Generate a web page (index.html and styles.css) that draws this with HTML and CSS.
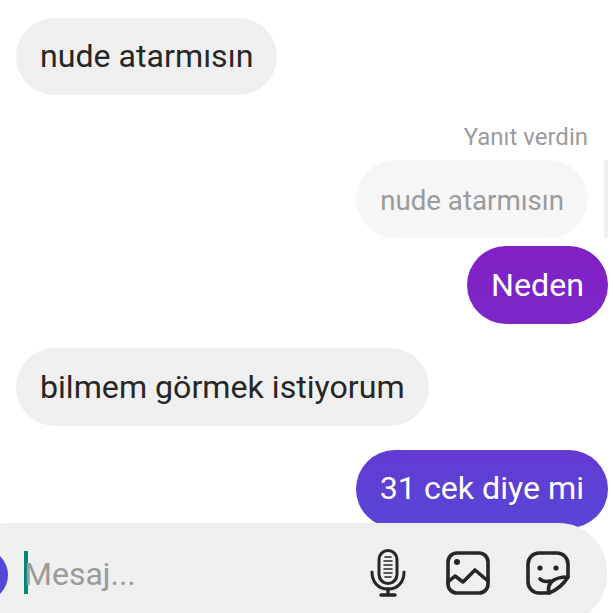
FILE: index.html
```html
<!DOCTYPE html>
<html lang="tr">
<head>
  <meta charset="UTF-8">
  <title>Mesajlar</title>
  <link rel="stylesheet" href="styles.css">
</head>
<body>
  <div class="thread">
    <div class="bubble incoming first">nude atarmısın</div>

    <div class="reply">
      <div class="reply-label">Yanıt verdin</div>
      <div class="reply-row">
        <div class="bubble quoted">nude atarmısın</div>
        <div class="reply-bar"></div>
      </div>
    </div>
    <div class="bubble outgoing neden">Neden</div>

    <div class="bubble incoming middle">bilmem görmek istiyorum</div>
    <div class="bubble outgoing last">31 cek diye mi</div>
  </div>

  <div class="composer">
    <div class="avatar"></div>
    <div class="caret"></div>
    <div class="placeholder">Mesaj...</div>
    <div class="actions">
      <svg class="icon mic" width="36" height="48" viewBox="0 0 36 48" fill="none" stroke="#262626" stroke-width="3" stroke-linecap="round">
        <rect x="9" y="1.500" width="18" height="33" rx="9"/>
        <path d="M15 8h6M14 12h8M14 16h8M14 20h8M14 24h8M15 28h6" stroke-width="1.600"/>
        <path d="M2 23c0 10 6 17 16 17s16-7 16-17"/>
        <path d="M18 40v6M11 46h14" stroke-width="3.400"/>
      </svg>
      <svg class="icon" width="44" height="44" viewBox="0 0 44 44" fill="none" stroke="#262626" stroke-width="3.600" stroke-linecap="round" stroke-linejoin="round">
        <rect x="2" y="2" width="40" height="40" rx="9"/>
        <circle cx="11" cy="11" r="3" fill="#262626" stroke="none"/>
        <path d="M2 31l7-6 8 6 12-12 13 11"/>
      </svg>
      <svg class="icon" width="44" height="44" viewBox="0 0 44 44" fill="none" stroke="#262626" stroke-width="3.600" stroke-linecap="round" stroke-linejoin="round">
        <path d="M23 42h-10c-6 0-11-5-11-11v-18c0-6 5-11 11-11h18c6 0 11 5 11 11v13c-5 8-11 13-19 16z"/>
        <path d="M23 42c-2-8 2-16 19-16"/>
        <path d="M14 28c2 2 6 3 10 2"/>
        <circle cx="14" cy="17" r="2.600" fill="#262626" stroke="none"/>
        <circle cx="30" cy="17" r="2.600" fill="#262626" stroke="none"/>
      </svg>
    </div>
  </div>
</body>
</html>
```

FILE: styles.css
```css
html, body {
  margin: 0;
  height: 100%;
  background-color: #fff;
  overflow: hidden;
}
body {
  position: relative;
  font-family: Roboto, "Liberation Sans", sans-serif;
  color: #262626;
}

.thread {
  display: flex;
  flex-direction: column;
  align-items: flex-start;
  padding: 18px 5px 0 16px;
}

.bubble {
  height: 78px;
  line-height: 78px;
  padding: 0 24px;
  border-radius: 39px;
  font-size: 32.15px;
  white-space: nowrap;
}
.first {
  height: 77px;
  line-height: 76px;
}
.incoming {
  background-color: #efefef;
}
.outgoing {
  align-self: flex-end;
  color: #fff;
}
.neden {
  margin-top: 8px;
  background: linear-gradient(#8120c4, #7c27c9);
}
.last {
  margin-top: 24px;
  line-height: 76px;
  background: linear-gradient(#633bd2, #5845d6);
}
.middle {
  margin-top: 24px;
}

.reply {
  align-self: flex-end;
  margin-top: 24px;
}
.reply-label {
  margin-right: 20px;
  text-align: right;
  font-size: 24px;
  line-height: 37px;
  color: #9b9b9b;
}
.reply-row {
  display: flex;
  margin-top: 4px;
}
.quoted {
  background-color: #f6f6f6;
  color: #9b9b9b;
  font-size: 27.7px;
  line-height: 82px;
}
.reply-bar {
  width: 4px;
  height: 78px;
  margin-left: 16px;
  background-color: #efefef;
}

/* input bar sits over the end of the thread */
.composer {
  position: absolute;
  left: -40px;
  right: 6px;
  top: 523px;
  height: 100px;
  display: flex;
  align-items: flex-start;
  background-color: #efefef;
  border-radius: 48px;
}
.avatar {
  width: 52px;
  height: 52px;
  margin: 26px 12px 0 -4px;
  flex: none;
  border-radius: 50%;
  background-color: #5446d8;
}
.caret {
  width: 4px;
  height: 43px;
  margin: 28px 0 0 4px;
  flex: none;
  background-color: #00896f;
}
.placeholder {
  margin-left: -4px;
  font-size: 32px;
  line-height: 44px;
  padding-top: 29px;
  color: #9b9b9b;
}
.actions {
  margin-left: auto;
  margin-right: 37px;
  padding-top: 28px;
  display: flex;
  align-items: flex-start;
  gap: 36px;
}
.icon {
  display: block;
}
.mic {
  margin-top: -2px;
  margin-right: 4px;
}
```
